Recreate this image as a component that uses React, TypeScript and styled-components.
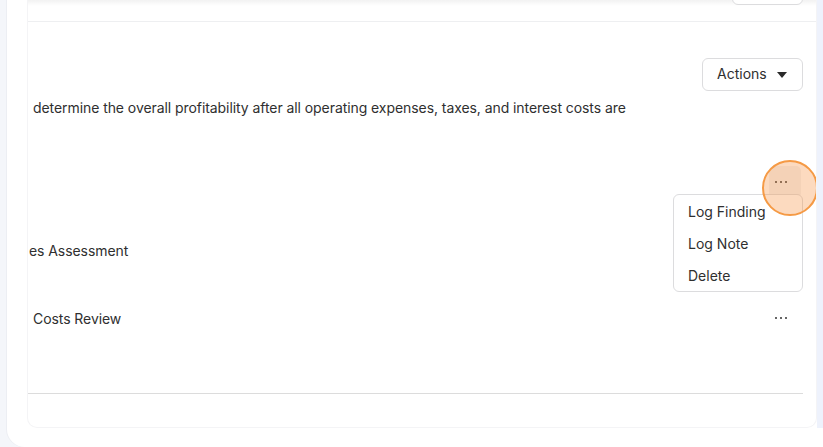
import React from "react";
import styled, { createGlobalStyle } from "styled-components";

const Global = createGlobalStyle`
  html, body { margin: 0; padding: 0; }
  body {
    width: 823px;
    height: 447px;
    overflow: hidden;
    background: #f4f6fa;
    font-family: Inter, "Open Sans", Arial, sans-serif;
    color: #2f2f2f;
  }
`;

const Page = styled.div`
  display: flex;
  height: 447px;
  padding-left: 7px;
  box-sizing: border-box;
`;

const Panel = styled.div`
  flex: 1;
  display: flex;
  background: #ffffff;
  border-bottom-left-radius: 18px;
  padding: 0 0 19px 20px;
  box-shadow: -1px 0 0 #eceef3;
`;

const Card = styled.div`
  flex: 1;
  display: flex;
  flex-direction: column;
  position: relative;
  overflow: hidden;
  background: #fff;
  border: 1px solid #f4f4f6;
  border-top: none;
  border-radius: 0 0 10px 10px;
`;

const ScrollTrack = styled.div`
  width: 6px;
  background: #eef2fc;
`;

const Header = styled.div`
  height: 22px;
  flex: none;
  display: flex;
  justify-content: flex-end;
  align-items: flex-end;
  padding: 0 13px 16px 0;
  box-sizing: border-box;
  overflow: hidden;
  border-bottom: 1px solid #eeeff1;
  background: linear-gradient(to bottom, rgba(0, 0, 0, 0.05), rgba(0, 0, 0, 0) 6px), #fff;
`;

const Button = styled.button`
  flex: none;
  height: 34px;
  border: 1px solid #dcdcde;
  border-radius: 6px;
  background: #fff;
  font-family: inherit;
  font-size: 14px;
  color: #2f2f2f;
  display: flex;
  align-items: center;
  gap: 10px;
  padding: 0 14px;
  box-sizing: border-box;
`;

const HiddenButton = styled(Button)`
  width: 71px;
`;

const Body = styled.div`
  display: flex;
  flex-direction: column;
  padding: 36px 13px 0 0;
`;

const ActionsRow = styled.div`
  display: flex;
  justify-content: flex-end;
`;

const ActionsButton = styled(Button)`
  width: 101px;
  height: 33px;
  padding-bottom: 3px;
`;

const Caret = styled.span`
  width: 0;
  height: 0;
  border-left: 5px solid transparent;
  border-right: 5px solid transparent;
  border-top: 6px solid #2a2a2a;
  margin-top: 4px;
`;

const Description = styled.p`
  margin: 7px 0 0;
  padding-left: 5px;
  font-size: 14px;
  line-height: 20px;
  letter-spacing: -0.07px;
  white-space: nowrap;
`;

const List = styled.div`
  display: flex;
  flex-direction: column;
  margin-top: 30px;
`;

const Row = styled.div`
  height: 68px;
  display: flex;
  align-items: center;
  justify-content: space-between;
`;

const RowTitle = styled.span<{ $indent: number }>`
  padding-left: ${(p) => p.$indent}px;
  font-size: 14px;
  letter-spacing: -0.07px;
  white-space: nowrap;
`;

const ActionCell = styled.div`
  position: relative;
  display: flex;
  padding-right: 2px;
`;

const DotsButton = styled.button<{ $active?: boolean }>`
  position: relative;
  width: 32px;
  height: 32px;
  border: none;
  border-radius: 5px;
  background: ${(p) => (p.$active ? "#f3f3f4" : "transparent")};
  display: flex;
  align-items: center;
  justify-content: center;
  gap: 2.5px;
  padding: 0 8px 0 0;
`;

const Dot = styled.span`
  width: 2.5px;
  height: 2.5px;
  border-radius: 50%;
  background: #333;
`;

const Menu = styled.div`
  position: absolute;
  top: 28px;
  right: 0;
  width: 130px;
  background: #fff;
  border: 1px solid #dcdcde;
  border-radius: 6px;
  display: flex;
  flex-direction: column;
  z-index: 2;
  box-sizing: border-box;
`;

const MenuItem = styled.div`
  height: 32px;
  display: flex;
  align-items: center;
  padding-left: 14px;
  font-size: 14px;
  color: #2f2f2f;
`;

const CursorRing = styled.span`
  position: absolute;
  left: -7px;
  top: -6px;
  width: 56px;
  height: 56px;
  border-radius: 50%;
  box-sizing: border-box;
  border: 2px solid #f59a45;
  background: rgba(245, 140, 55, 0.32);
  z-index: 3;
  pointer-events: none;
`;

const Divider = styled.div`
  height: 1px;
  background: #dcdcdc;
  margin-top: 41px;
`;

const Dots = ({ active }: { active?: boolean }) => (
  <DotsButton $active={active}>
    <Dot />
    <Dot />
    <Dot />
    {active && <CursorRing />}
  </DotsButton>
);

export default function App() {
  return (
    <>
      <Global />
      <Page>
        <Panel>
          <Card>
            <Header>
              <HiddenButton />
            </Header>
            <Body>
              <ActionsRow>
                <ActionsButton>
                  Actions
                  <Caret />
                </ActionsButton>
              </ActionsRow>
              <Description>
                determine the overall profitability after all operating expenses, taxes, and interest costs are
              </Description>
              <List>
                <Row>
                  <RowTitle $indent={0} />
                  <ActionCell>
                    <Dots active />
                    <Menu>
                      <MenuItem>Log Finding</MenuItem>
                      <MenuItem>Log Note</MenuItem>
                      <MenuItem>Delete</MenuItem>
                    </Menu>
                  </ActionCell>
                </Row>
                <Row>
                  <RowTitle $indent={1}>es Assessment</RowTitle>
                  <ActionCell>
                    <Dots />
                  </ActionCell>
                </Row>
                <Row>
                  <RowTitle $indent={5}>Costs Review</RowTitle>
                  <ActionCell>
                    <Dots />
                  </ActionCell>
                </Row>
              </List>
              <Divider />
            </Body>
          </Card>
          <ScrollTrack />
        </Panel>
      </Page>
    </>
  );
}
